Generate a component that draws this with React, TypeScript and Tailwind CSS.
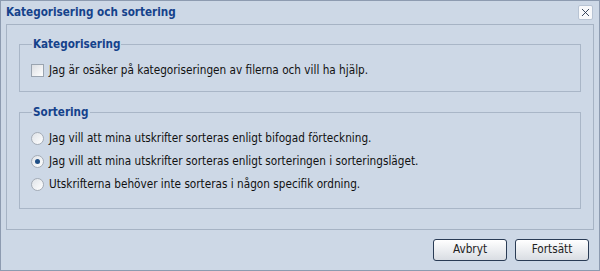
import { X } from 'lucide-react';

const Radio = ({ checked }: { checked?: boolean }) => (
  <span className="w-[13px] h-[13px] rounded-full border border-[#a4acb6] bg-gradient-to-br from-[#dfe3e8] to-white flex items-center justify-center shrink-0">
    {checked && <span className="w-[5px] h-[5px] rounded-full bg-[#1f4f86]" />}
  </span>
);

const App = () => {
  return (
    <div
      className="w-[600px] h-[271px] bg-[#cdd8e6] border border-[#8d9bb0] flex flex-col text-[#111] overflow-hidden"
      style={{ fontFamily: '"DejaVu Sans Condensed", "DejaVu Sans", sans-serif' }}
    >
      {/* Title bar */}
      <div className="h-[23px] flex items-center justify-between pl-[5px] pr-[6px]">
        <span className="text-[11.6px] font-bold text-[#15428b]">Kategorisering och sortering</span>
        <button className="w-[15px] h-[15px] bg-white/85 border border-[#b8c4d4] rounded-[2px] flex items-center justify-center text-[#1e2e48]">
          <X size={15} strokeWidth={1.6} />
        </button>
      </div>

      {/* Body */}
      <div className="mx-[5px] h-[206px] border border-[#a6b3c4] bg-[#cdd8e6] px-[12px] pt-[12px]">
        <fieldset className="border border-[#a9b6c7] h-[55px] pl-[11px] pr-[12px]">
          <legend className="ml-[1px] px-[1px] text-[11.6px] font-bold text-[#15428b] leading-[14px]">Kategorisering</legend>
          <label className="flex items-center gap-[5px] text-[11.7px] leading-[14px] mt-[12px]">
            <span className="w-[13px] h-[13px] border border-[#9aa4b0] bg-gradient-to-br from-[#dcdfe3] to-white shrink-0" />
            Jag är osäker på kategoriseringen av filerna och vill ha hjälp.
          </label>
        </fieldset>

        <fieldset className="border border-[#a9b6c7] h-[104px] pl-[11px] pr-[12px] mt-[13px]">
          <legend className="ml-[1px] px-[1px] text-[11.6px] font-bold text-[#15428b] leading-[14px]">Sortering</legend>
          <div className="flex flex-col gap-[9px] text-[11.7px] leading-[14px] mt-[12px]">
            <label className="flex items-center gap-[5px]">
              <Radio />
              Jag vill att mina utskrifter sorteras enligt bifogad förteckning.
            </label>
            <label className="flex items-center gap-[5px]">
              <Radio checked />
              Jag vill att mina utskrifter sorteras enligt sorteringen i sorteringsläget.
            </label>
            <label className="flex items-center gap-[5px]">
              <Radio />
              Utskrifterna behöver inte sorteras i någon specifik ordning.
            </label>
          </div>
        </fieldset>
      </div>

      {/* Buttons */}
      <div className="flex justify-end gap-[8px] pr-[10px] pt-[9px]">
        <button className="w-[74px] h-[22px] rounded-[3px] border border-[#2a3c55] bg-gradient-to-b from-white to-[#d9dde3] text-[11.7px] text-[#222]">
          Avbryt
        </button>
        <button className="w-[74px] h-[22px] rounded-[3px] border border-[#2a3c55] bg-gradient-to-b from-white to-[#d9dde3] text-[11.7px] text-[#222]">
          Fortsätt
        </button>
      </div>
    </div>
  );
};

export default App;
